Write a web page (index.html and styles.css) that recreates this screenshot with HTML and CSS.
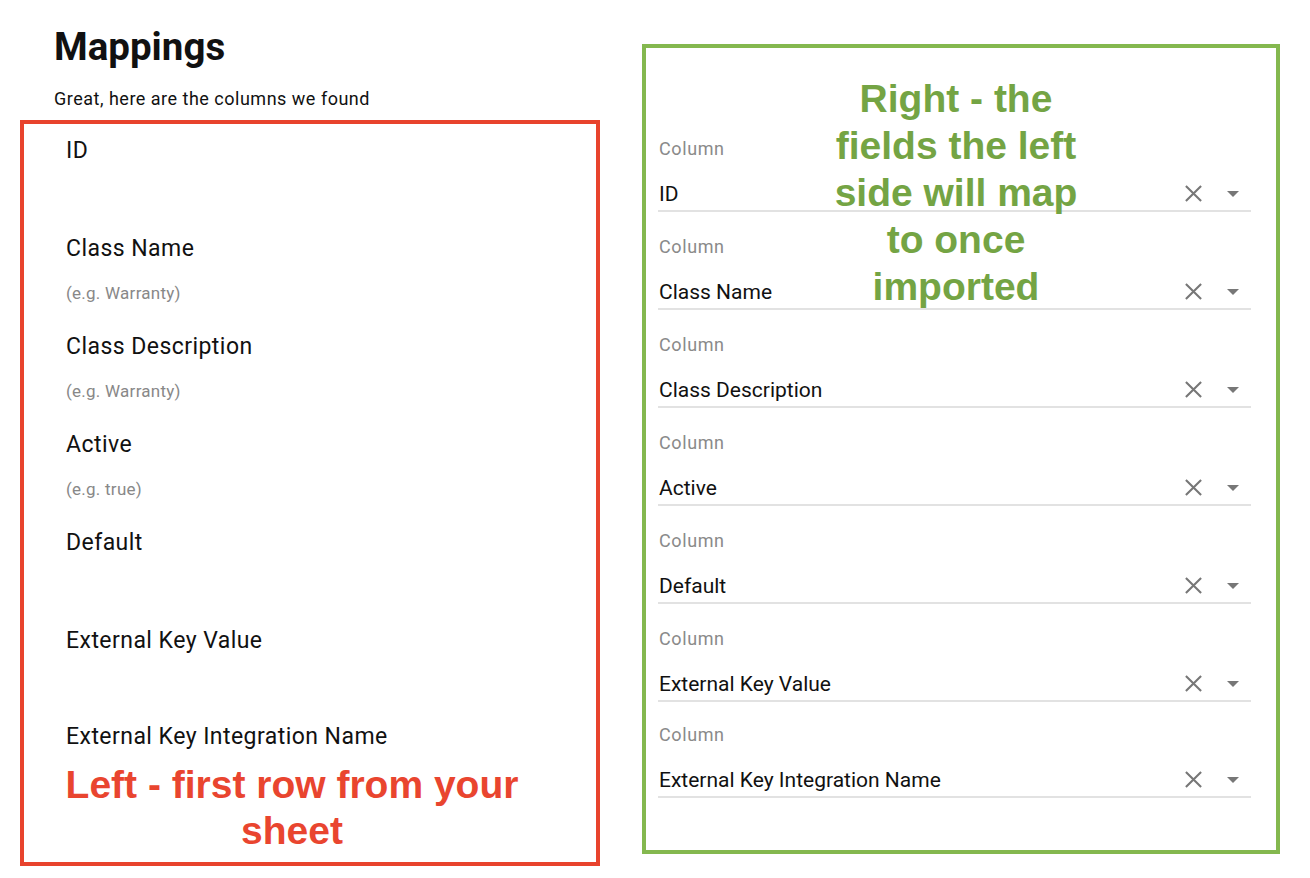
FILE: index.html
```html
<!DOCTYPE html>
<html lang="en">
<head>
<meta charset="utf-8">
<title>Mappings</title>
<link rel="stylesheet" href="styles.css">
</head>
<body>
<div class="page">
  <div class="left-col">
    <h1 class="title">Mappings</h1>
    <p class="subtitle">Great, here are the columns we found</p>
    <div class="source-box">
      <div class="src-row"><div class="src-label">ID</div></div>
      <div class="src-row"><div class="src-label">Class Name</div><div class="src-hint">(e.g. Warranty)</div></div>
      <div class="src-row"><div class="src-label">Class Description</div><div class="src-hint">(e.g. Warranty)</div></div>
      <div class="src-row"><div class="src-label">Active</div><div class="src-hint">(e.g. true)</div></div>
      <div class="src-row"><div class="src-label">Default</div></div>
      <div class="src-row src-row-short"><div class="src-label">External Key Value</div></div>
      <div class="src-row src-row-last"><div class="src-label">External Key Integration Name</div></div>
      <div class="note note-red">Left - first row from your<br>sheet</div>
    </div>
  </div>
  <div class="right-col">
    <div class="target-box">
      <div class="note note-green">Right - the<br>fields the left<br>side will map<br>to once<br>imported</div>
      <div class="field">
        <div class="field-label">Column</div>
        <div class="field-input"><span class="field-value">ID</span>
          <svg class="icon-x" viewBox="0 0 20 20"><path d="M2 2L18 18M18 2L2 18"/></svg>
          <svg class="icon-caret" viewBox="0 0 12 6"><path d="M0 0H12L6 6Z"/></svg></div>
      </div>
      <div class="field">
        <div class="field-label">Column</div>
        <div class="field-input"><span class="field-value">Class Name</span>
          <svg class="icon-x" viewBox="0 0 20 20"><path d="M2 2L18 18M18 2L2 18"/></svg>
          <svg class="icon-caret" viewBox="0 0 12 6"><path d="M0 0H12L6 6Z"/></svg></div>
      </div>
      <div class="field">
        <div class="field-label">Column</div>
        <div class="field-input"><span class="field-value">Class Description</span>
          <svg class="icon-x" viewBox="0 0 20 20"><path d="M2 2L18 18M18 2L2 18"/></svg>
          <svg class="icon-caret" viewBox="0 0 12 6"><path d="M0 0H12L6 6Z"/></svg></div>
      </div>
      <div class="field">
        <div class="field-label">Column</div>
        <div class="field-input"><span class="field-value">Active</span>
          <svg class="icon-x" viewBox="0 0 20 20"><path d="M2 2L18 18M18 2L2 18"/></svg>
          <svg class="icon-caret" viewBox="0 0 12 6"><path d="M0 0H12L6 6Z"/></svg></div>
      </div>
      <div class="field">
        <div class="field-label">Column</div>
        <div class="field-input"><span class="field-value">Default</span>
          <svg class="icon-x" viewBox="0 0 20 20"><path d="M2 2L18 18M18 2L2 18"/></svg>
          <svg class="icon-caret" viewBox="0 0 12 6"><path d="M0 0H12L6 6Z"/></svg></div>
      </div>
      <div class="field field-short">
        <div class="field-label">Column</div>
        <div class="field-input"><span class="field-value">External Key Value</span>
          <svg class="icon-x" viewBox="0 0 20 20"><path d="M2 2L18 18M18 2L2 18"/></svg>
          <svg class="icon-caret" viewBox="0 0 12 6"><path d="M0 0H12L6 6Z"/></svg></div>
      </div>
      <div class="field">
        <div class="field-label">Column</div>
        <div class="field-input"><span class="field-value">External Key Integration Name</span>
          <svg class="icon-x" viewBox="0 0 20 20"><path d="M2 2L18 18M18 2L2 18"/></svg>
          <svg class="icon-caret" viewBox="0 0 12 6"><path d="M0 0H12L6 6Z"/></svg></div>
      </div>
    </div>
  </div>
</div>
</body>
</html>
```
FILE: styles.css
```css
* { box-sizing: border-box; }
html, body { margin: 0; padding: 0; background: #fff; }
body {
  font-family: Roboto, "Liberation Sans", Arial, sans-serif;
  color: #111;
  width: 1310px;
  height: 878px;
  overflow: hidden;
}
.page {
  display: flex;
  align-items: flex-start;
  gap: 42px;
  padding-left: 20px;
}
.left-col {
  width: 580px;
  flex: none;
}
.title {
  margin: 25px 0 0 34px;
  font-size: 38.5px;
  line-height: 44px;
  font-weight: 700;
  color: #111;
}
.subtitle {
  margin: 19px 0 0 34px;
  font-size: 18px;
  line-height: 22px;
  letter-spacing: 0.5px;
  color: #111;
}
.source-box {
  margin-top: 10px;
  border: 4px solid #e8432d;
  height: 746px;
  padding-top: 13px;
}
.src-row {
  height: 98px;
  padding-left: 42px;
}
.src-row-short { height: 96px; }
.src-row-last { height: auto; }
.src-label {
  font-size: 23px;
  line-height: 28px;
  letter-spacing: 0.45px;
  color: #111;
}
.src-hint {
  margin-top: 20px;
  font-size: 17px;
  line-height: 20px;
  letter-spacing: 0.25px;
  color: #888;
}
.note {
  font-family: "Liberation Sans", Arial, sans-serif;
  font-weight: 700;
  font-size: 39px;
  line-height: 47px;
  text-align: center;
}
.note-red {
  color: #e9452f;
  margin-top: 11px;
  padding-right: 36px;
  line-height: 46px;
}
.right-col {
  width: 638px;
  flex: none;
}
.target-box {
  position: relative;
  margin-top: 44px;
  border: 4px solid #84b84f;
  height: 810px;
  padding: 91px 25px 0 13px;
}
.note-green {
  position: absolute;
  top: 26.5px;
  left: 0;
  right: 10px;
  color: #74a444;
}
.field {
  height: 98px;
}
.field-short { height: 96px; }
.field-label {
  font-size: 18px;
  line-height: 20px;
  letter-spacing: 0.6px;
  color: #8a8a8a;
}
.field-input {
  display: flex;
  align-items: center;
  margin-top: 21px;
  height: 32px;
  padding-bottom: 3px;
  border-bottom: 2px solid #e2e2e2;
  margin-left: -1px;
  padding-left: 1px;
}
.field-value {
  flex: 1;
  font-size: 21px;
  line-height: 28px;
  color: #111;
}
.icon-x {
  width: 19px;
  height: 19px;
  fill: none;
  stroke: #777;
  stroke-width: 2.2;
  margin-right: 24px;
}
.icon-caret {
  width: 12px;
  height: 6px;
  fill: #777;
  margin-right: 12px;
}
```
